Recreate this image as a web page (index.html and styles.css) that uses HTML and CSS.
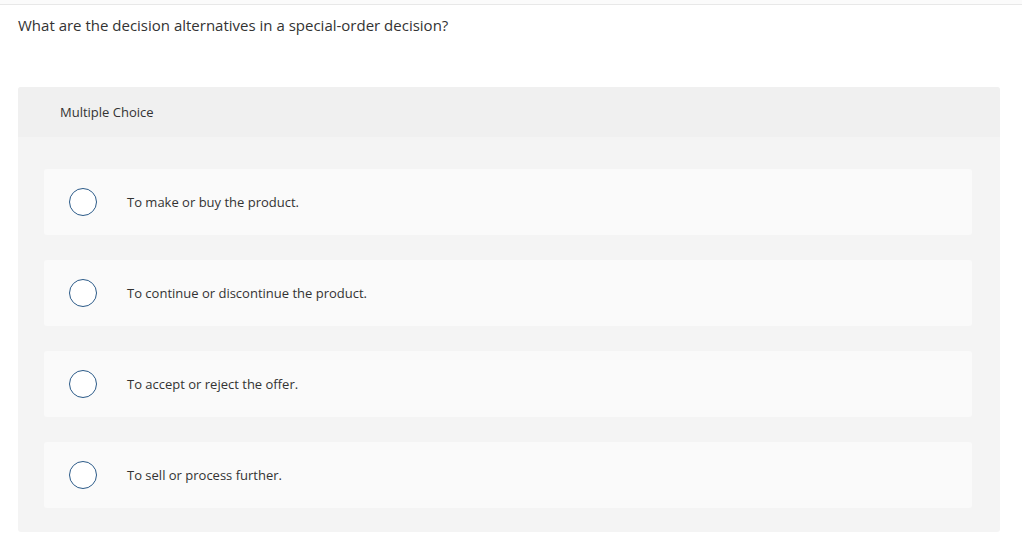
FILE: index.html
```html
<!DOCTYPE html>
<html lang="en">
<head>
    <meta charset="UTF-8">
    <meta name="viewport" content="width=device-width, initial-scale=1.0">
    <title>Question</title>
    <link rel="stylesheet" href="styles.css">
</head>
<body>
    <div class="top-bar"></div>

    <div class="question">
        <p class="prompt">What are the decision alternatives in a special-order decision?</p>

        <div class="choice-panel">
            <div class="panel-head">Multiple Choice</div>

            <div class="panel-body">
                <label class="option">
                    <span class="radio"></span>
                    <span class="option-text">To make or buy the product.</span>
                </label>
                <label class="option">
                    <span class="radio"></span>
                    <span class="option-text">To continue or discontinue the product.</span>
                </label>
                <label class="option">
                    <span class="radio"></span>
                    <span class="option-text">To accept or reject the offer.</span>
                </label>
                <label class="option">
                    <span class="radio"></span>
                    <span class="option-text">To sell or process further.</span>
                </label>
            </div>
        </div>
    </div>
</body>
</html>
```

FILE: styles.css
```css
body {
    margin: 0;
    background: #ffffff;
    font-family: "Open Sans", "Lato", sans-serif;
    color: #333333;
}

.top-bar {
    height: 4px;
    background: #fbfbfb;
    border-bottom: 1px solid #e8e8e8;
}

.question {
    padding: 0 22px 0 18px;
}

.prompt {
    margin: 0;
    padding-top: 11px;
    height: 71px;
    font-size: 15px;
    line-height: 18px;
}

.choice-panel {
    border-radius: 3px;
    overflow: hidden;
    background: #f4f4f4;
}

.panel-head {
    height: 50px;
    line-height: 50px;
    padding-left: 42px;
    background: #f0f0f0;
    font-size: 13px;
}

.panel-body {
    display: flex;
    flex-direction: column;
    gap: 25px;
    padding: 32px 28px 24px 26px;
}

.option {
    display: flex;
    align-items: center;
    height: 66px;
    padding-left: 25px;
    background: #fafafa;
    border-radius: 3px;
    cursor: pointer;
}

.radio {
    box-sizing: border-box;
    width: 28px;
    height: 28px;
    border: 1.5px solid #2b5a88;
    border-radius: 50%;
    background: #ffffff;
    flex-shrink: 0;
}

.option-text {
    margin-left: 30px;
    font-size: 13px;
}
```
